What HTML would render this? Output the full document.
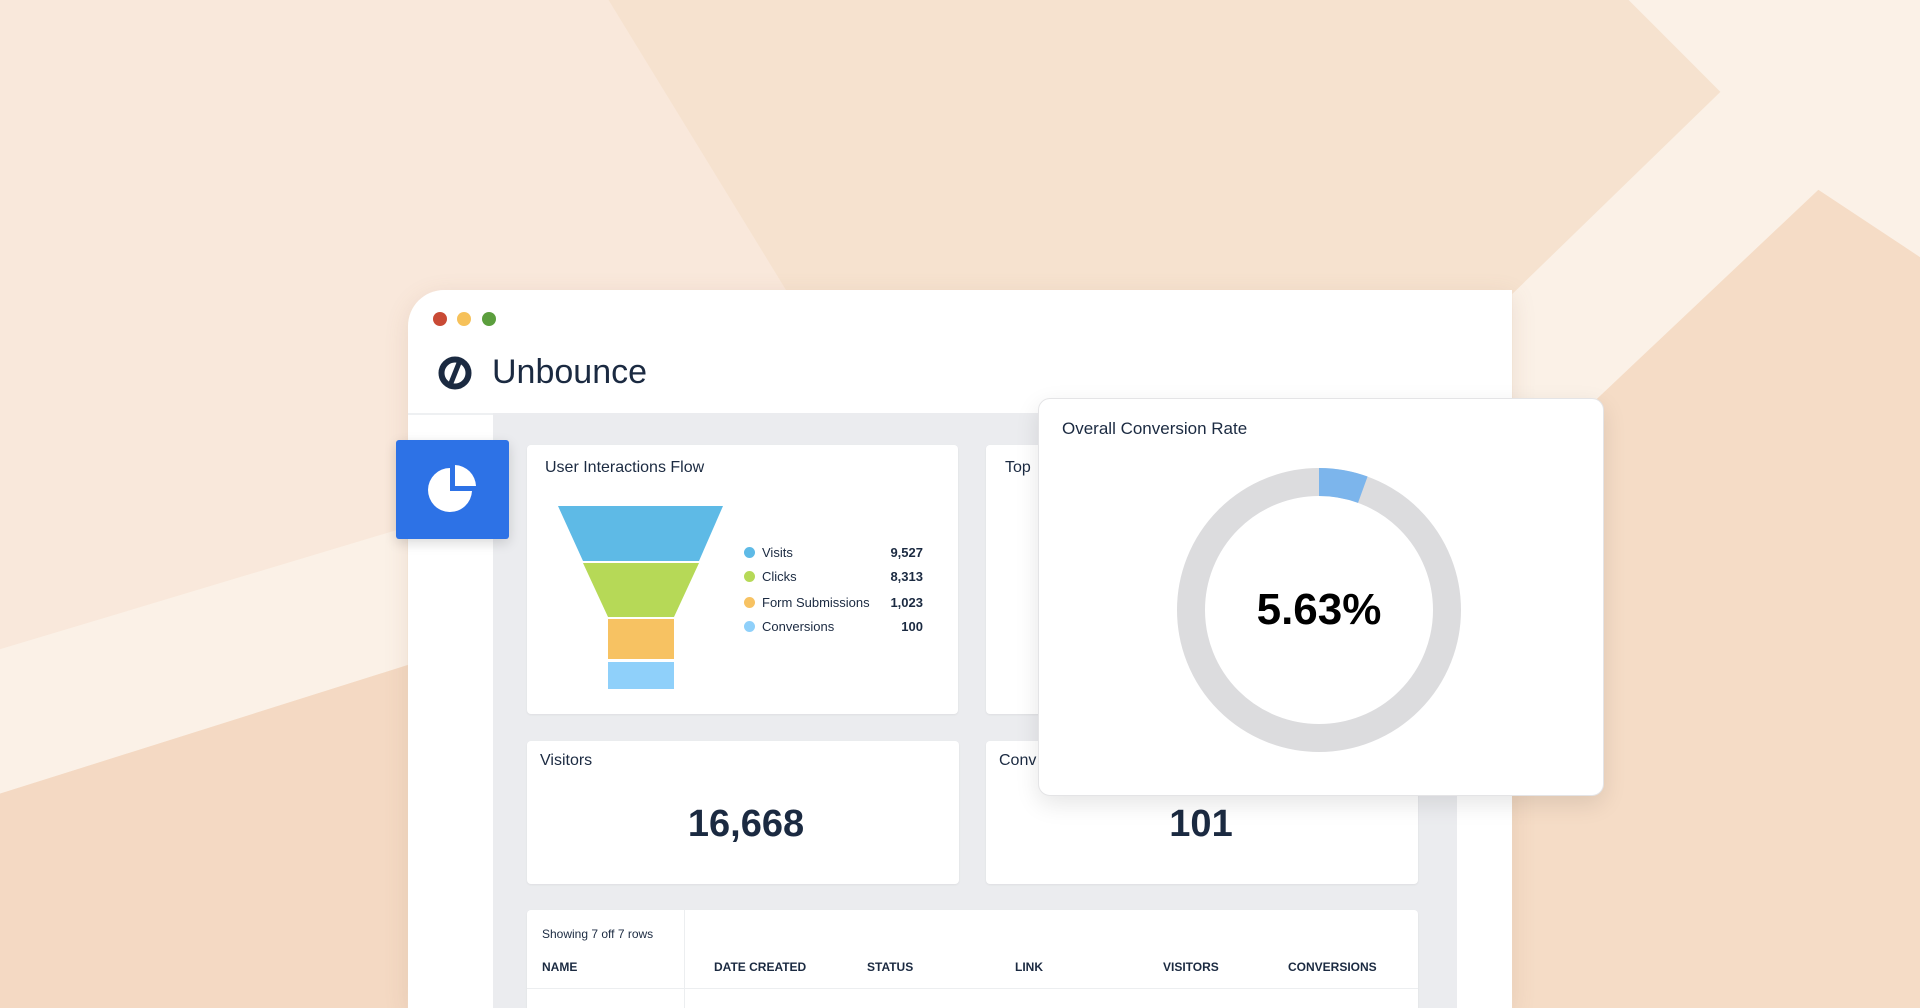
<!DOCTYPE html>
<html><head><meta charset="utf-8"><style>
*{margin:0;padding:0;box-sizing:border-box}
html,body{width:1920px;height:1008px;overflow:hidden}
body{position:relative;font-family:"Liberation Sans",Arial,sans-serif;color:#1b2a41;background:#f6e2cf}
.a{position:absolute}
.card{position:absolute;background:#fff;border-radius:4px;box-shadow:0 1px 2px rgba(0,0,0,.06)}
.t{position:absolute;white-space:nowrap}
.th{font-weight:bold;font-size:12px;top:960px}
.leg{position:absolute;font-size:13px;left:762px}
.dot{position:absolute;width:11px;height:11px;border-radius:50%;left:744px}
</style></head><body>
<svg class="a" style="left:0;top:0" width="1920" height="1008" viewBox="0 0 1568 823" preserveAspectRatio="none">
<rect width="1568" height="823" fill="#f6e2cf"/>
<polygon points="0,0 497,0 650,250 333,430 0,530" fill="#f9e8db"/>
<polygon points="0,530 333,430 333,543 0,648" fill="#fbf1e7"/>
<polygon points="0,648 333,543 333,823 0,823" fill="#f4d9c3"/>
<polygon points="1330,0 1568,0 1568,210 1485,155 1235,391 1235,240 1405,75" fill="#fbf1e7"/>
<polygon points="1568,210 1485,155 1235,391 1235,823 1568,823" fill="#f5dcc6"/>
</svg>
<div class="a" style="left:408px;top:290px;width:1104px;height:718px;background:#fff;border-radius:36px 0 0 0;box-shadow:0 6px 24px rgba(150,110,80,.15)"></div>
<div class="a" style="left:433px;top:312px;width:14px;height:14px;border-radius:50%;background:#c94a35"></div>
<div class="a" style="left:457px;top:312px;width:14px;height:14px;border-radius:50%;background:#f6c15a"></div>
<div class="a" style="left:482px;top:312px;width:14px;height:14px;border-radius:50%;background:#5b9e3d"></div>
<svg class="a" style="left:438px;top:356px" width="34" height="34" viewBox="0 0 34 34"><circle cx="17" cy="17" r="13.5" fill="none" stroke="#1b2a41" stroke-width="6"/><path d="M21 7 L13 27" stroke="#1b2a41" stroke-width="5"/></svg>
<div class="t" style="left:492px;top:353px;font-size:34px;font-weight:500">Unbounce</div>
<div class="a" style="left:493px;top:413px;width:964px;height:595px;background:#ebecef"></div>
<div class="a" style="left:408px;top:413px;width:85px;height:595px;background:#fff;border-top:2px solid #eef0f2"></div>
<div class="a" style="left:396px;top:440px;width:113px;height:99px;background:#2d72e6;border-radius:3px;box-shadow:0 4px 12px rgba(0,0,0,.15)"></div>
<svg class="a" style="left:420px;top:458px" width="64" height="64" viewBox="0 0 64 64"><path d="M30 10 A22 22 0 1 0 52 33 L30 33 Z" fill="#fff"/><path d="M35 7 A22 22 0 0 1 56 28 L35 28 Z" fill="#fff"/></svg>
<div class="card" style="left:527px;top:445px;width:431px;height:269px"></div>
<div class="t" style="left:545px;top:459px;font-size:16px">User Interactions Flow</div>
<svg class="a" style="left:0;top:0" width="1920" height="1008">
<polygon points="558,506 723,506 699,561 583,561" fill="#5ebae6"/>
<polygon points="583,563 699,563 674,617 608,617" fill="#b6d957"/>
<rect x="608" y="619" width="66" height="40" fill="#f7c262"/>
<rect x="608" y="662" width="66" height="27" fill="#8fd0fa"/>
</svg>
<div class="dot" style="top:547px;background:#5ebae6"></div><div class="leg" style="top:545px">Visits</div>
<div class="dot" style="top:571px;background:#b6d957"></div><div class="leg" style="top:569px">Clicks</div>
<div class="dot" style="top:597px;background:#f7c262"></div><div class="leg" style="top:595px">Form Submissions</div>
<div class="dot" style="top:621px;background:#8fd0fa"></div><div class="leg" style="top:619px">Conversions</div>
<div class="t" style="left:870px;width:53px;text-align:right;top:545px;font-size:13px;font-weight:bold">9,527</div>
<div class="t" style="left:870px;width:53px;text-align:right;top:569px;font-size:13px;font-weight:bold">8,313</div>
<div class="t" style="left:870px;width:53px;text-align:right;top:595px;font-size:13px;font-weight:bold">1,023</div>
<div class="t" style="left:870px;width:53px;text-align:right;top:619px;font-size:13px;font-weight:bold">100</div>
<div class="card" style="left:986px;top:445px;width:432px;height:269px"></div>
<div class="t" style="left:1005px;top:459px;font-size:16px">Top</div>
<div class="card" style="left:527px;top:741px;width:432px;height:143px"></div>
<div class="t" style="left:540px;top:752px;font-size:16px">Visitors</div>
<div class="t" style="left:646px;width:200px;text-align:center;top:803px;font-size:38px;font-weight:bold">16,668</div>
<div class="card" style="left:986px;top:741px;width:432px;height:143px"></div>
<div class="t" style="left:999px;top:752px;font-size:16px">Conv</div>
<div class="t" style="left:1101px;width:200px;text-align:center;top:803px;font-size:38px;font-weight:bold">101</div>
<div class="card" style="left:527px;top:910px;width:891px;height:120px"></div>
<div class="a" style="left:684px;top:910px;width:1px;height:100px;background:#eceef0"></div>
<div class="a" style="left:527px;top:988px;width:891px;height:1px;background:#eceef0"></div>
<div class="t" style="left:542px;top:927px;font-size:12px">Showing 7 off 7 rows</div>
<div class="t th" style="left:542px">NAME</div>
<div class="t th" style="left:714px">DATE CREATED</div>
<div class="t th" style="left:867px">STATUS</div>
<div class="t th" style="left:1015px">LINK</div>
<div class="t th" style="left:1163px">VISITORS</div>
<div class="t th" style="left:1288px">CONVERSIONS</div>
<div class="a" style="left:1038px;top:398px;width:566px;height:398px;background:#fff;border-radius:12px;border:1px solid #e4e4e6;box-shadow:0 8px 24px rgba(0,0,0,.1)"></div>
<div class="t" style="left:1062px;top:419px;font-size:17px">Overall Conversion Rate</div>
<svg class="a" style="left:1169px;top:460px" width="300" height="300" viewBox="0 0 300 300">
<circle cx="150" cy="150" r="128" fill="none" stroke="#dcdcde" stroke-width="28"/>
<path d="M150 22 A128 128 0 0 1 193.8 29.7" fill="none" stroke="#7cb5ec" stroke-width="28"/>
</svg>
<div class="t" style="left:1219px;width:200px;text-align:center;top:585px;font-size:44px;font-weight:bold;color:#000">5.63%</div>
</body></html>
